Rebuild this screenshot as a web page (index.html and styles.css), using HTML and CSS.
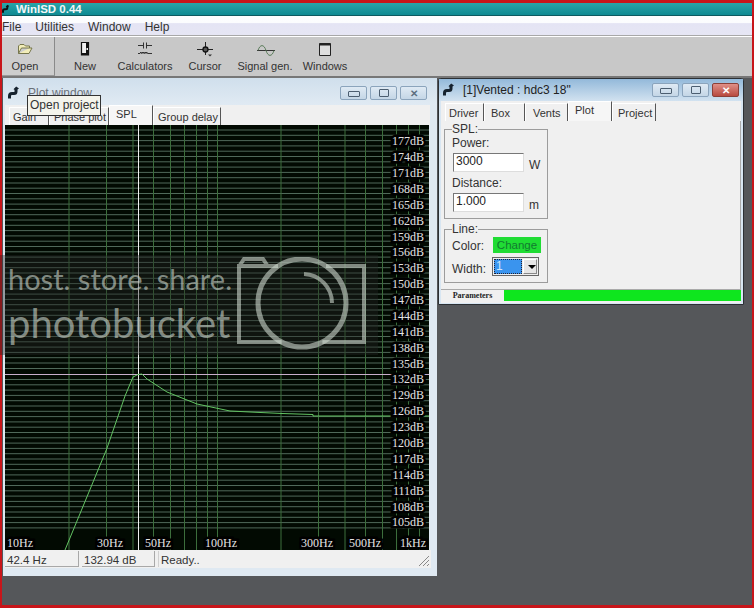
FILE: index.html
```html
<!DOCTYPE html>
<html lang="en">
<head>
<meta charset="utf-8">
<title>WinISD 0.44</title>
<link rel="stylesheet" href="styles.css">
</head>
<body>
<svg class="sprites" width="0" height="0" aria-hidden="true">
  <symbol id="pipe" viewBox="0 0 12 14">
    <path d="M1.500 12.500 V10 Q1.500 7.500 4 7.500 H6 Q8 7.500 8 5.500 V2.500" fill="none" stroke="currentColor" stroke-width="3"/>
    <path d="M5.500 3.200 L8.200 0.600 L11 2.400 L8 4.200 Z" fill="currentColor"/>
  </symbol>
</svg>
<div class="screen">
  <div class="app">
    <header class="titlebar"><svg class="title-icon"><use href="#pipe"/></svg><span>WinISD 0.44</span></header>
    <nav class="menubar"><span>File</span><span>Utilities</span><span>Window</span><span>Help</span></nav>
    <div class="toolbar">
      <div class="tool tool-open">
        <svg class="tool-icon" viewBox="0 0 20 16"><path d="M3.500 12.500 V5 L5 3.500 H9 L10.500 5 H14.500 V7 H6.500 L3.500 12.500 H14 L17 7 H14.500" fill="#f2edb8" stroke="#77774c"/></svg>
        <span>Open</span>
      </div>
      <div class="tool">
        <svg class="tool-icon" viewBox="0 0 20 16"><path d="M6.500 1.500 H13.500 V14 H6.500 Z" fill="#f0f0f0" stroke="#111" stroke-width="1.200"/><path d="M11 2 H14 V14 H7 V12 H11 Z" fill="#111"/><path d="M11.500 7 H13 V9 H11.500 Z" fill="#f0f0f0"/></svg>
        <span>New</span>
      </div>
      <div class="tool">
        <svg class="tool-icon" viewBox="0 0 20 16"><path d="M3 4.500 H8.500 M8.500 1.500 V7.500 M11.500 1.500 V7.500 M11.500 4.500 H17" fill="none" stroke="#333"/><path d="M3 12.500 H5 q.75 -3 1.500 0 q.75 -3 1.500 0 q.75 -3 1.500 0 q.75 -3 1.500 0 q.75 -3 1.500 0 H17" fill="none" stroke="#333"/></svg>
        <span>Calculators</span>
      </div>
      <div class="tool">
        <svg class="tool-icon" viewBox="0 0 20 16"><path d="M10.500 1 V14 M2 8.500 H18" stroke="#222"/><circle cx="10.500" cy="8.500" r="2.500" fill="#555" stroke="#111" stroke-width="1.300"/><path d="M13 13.500 H17 L15 15.500 Z" fill="#333"/></svg>
        <span>Cursor</span>
      </div>
      <div class="tool">
        <svg class="tool-icon tool-wide" viewBox="0 0 24 16"><path d="M4 9.500 H22" stroke="#333"/><path d="M5 9.500 C7 3 11 3 13 9.500 C15 16 19 16 21 9.500" fill="none" stroke="#5a7c5a"/></svg>
        <span>Signal gen.</span>
      </div>
      <div class="tool">
        <svg class="tool-icon" viewBox="0 0 20 16"><path d="M4.500 2.500 H15.500 V14.500 H4.500 Z" fill="#dedede" stroke="#222"/><path d="M4.500 3.500 H15.500" stroke="#222" stroke-width="2"/></svg>
        <span>Windows</span>
      </div>
    </div>
    <main class="desktop">
      <section class="window plot-window">
        <div class="win-title"><svg class="win-icon"><use href="#pipe"/></svg><span class="win-name">Plot window</span>
          <div class="win-buttons"><i class="wb wb-min"></i><i class="wb wb-max"></i><i class="wb wb-close">✕</i></div>
        </div>
        <div class="tabs plot-tabs">
          <span class="tab t-gain">Gain</span><span class="tab t-phase">Phase plot</span><span class="tab sel t-spl">SPL</span><span class="tab t-group">Group delay</span>
        </div>
        <svg class="chart" viewBox="5 126 424 425" width="424" height="425">
          <rect x="5" y="126" width="424" height="425" fill="#020a02"/>
          <path class="hgrid" d="M5 131h424M5 136.300h424M5 141.600h424M5 146.900h424M5 152.200h424M5 157.500h424M5 162.800h424M5 168.100h424M5 173.400h424M5 178.700h424M5 184h424M5 189.200h424M5 194.500h424M5 199.800h424M5 205.100h424M5 210.400h424M5 215.700h424M5 221h424M5 226.300h424M5 231.600h424M5 236.900h424M5 242.200h424M5 247.500h424M5 252.800h424M5 258.100h424M5 263.400h424M5 268.700h424M5 274h424M5 279.300h424M5 284.600h424M5 289.900h424M5 295.100h424M5 300.400h424M5 305.700h424M5 311h424M5 316.300h424M5 321.600h424M5 326.900h424M5 332.200h424M5 337.500h424M5 342.800h424M5 348.100h424M5 353.400h424M5 358.700h424M5 364h424M5 369.500h424M5 380.500h424M5 385.800h424M5 391.100h424M5 396.400h424M5 401.700h424M5 407h424M5 412.300h424M5 417.600h424M5 422.900h424M5 428.200h424M5 433.500h424M5 438.800h424M5 444.100h424M5 449.400h424M5 454.700h424M5 460h424M5 465.300h424M5 470.600h424M5 475.900h424M5 481.200h424M5 486.500h424M5 491.800h424M5 497.100h424M5 502.400h424M5 507.700h424M5 513h424M5 518.300h424M5 523.600h424M5 528.900h424"/>
          <path class="vgrid" d="M69 126V551M106.500 126V551M133 126V551M153.500 126V551M170.500 126V551M184.500 126V551M196.500 126V551M207.500 126V551M217.500 126V551M281 126V551M318.500 126V551M345 126V551M365.500 126V551M382.500 126V551M396.500 126V551M408.500 126V551M419.500 126V551"/>
          <path class="pink" d="M5 375.500H429"/>
          <path class="cursor" d="M138.500 126V551"/>
          <path class="curve" d="M65 551 L106.700 450 L125 397 L133 378 L138 375.500 L142 375 L147 380 L167 393 L197 405 L230 412 L250 413 L282 414.500 L313 415.500 L313 417 L429 417"/>
          <g class="ticks">
            <text x="424" y="146">177dB</text><text x="424" y="162">174dB</text><text x="424" y="178">171dB</text><text x="424" y="194">168dB</text><text x="424" y="209.500">165dB</text><text x="424" y="225.500">162dB</text><text x="424" y="241.500">159dB</text><text x="424" y="257">156dB</text><text x="424" y="273">153dB</text><text x="424" y="289">150dB</text><text x="424" y="305">147dB</text><text x="424" y="321">144dB</text><text x="424" y="336.500">141dB</text><text x="424" y="352.500">138dB</text><text x="424" y="368.500">135dB</text><text x="424" y="384">132dB</text><text x="424" y="400">129dB</text><text x="424" y="416">126dB</text><text x="424" y="432">123dB</text><text x="424" y="448">120dB</text><text x="424" y="464">117dB</text><text x="424" y="480">114dB</text><text x="424" y="495.500">111dB</text><text x="424" y="511.500">108dB</text><text x="424" y="527">105dB</text>
          </g>
          <g class="ticks hz">
            <text x="7" y="548">10Hz</text><text x="97" y="548">30Hz</text><text x="145" y="548">50Hz</text><text x="205" y="548">100Hz</text><text x="301" y="548">300Hz</text><text x="349" y="548">500Hz</text><text x="400" y="548">1kHz</text>
          </g>
        </svg>
        <div class="statusbar">
          <span class="field f-hz">42.4 Hz</span><span class="field f-db">132.94 dB</span><span class="field f-msg">Ready..</span>
          <svg class="grip" viewBox="0 0 12 12"><path d="M1 11 L11 1 M5 11 L11 5 M9 11 L11 9" stroke="#888" fill="none"/></svg>
        </div>
      </section>

      <section class="window vented-window">
        <div class="win-title"><svg class="win-icon"><use href="#pipe"/></svg><span class="win-name">[1]Vented : hdc3 18"</span>
          <div class="win-buttons"><i class="wb wb-min"></i><i class="wb wb-max"></i><i class="wb wb-close">✕</i></div>
        </div>
        <div class="tabs vent-tabs">
          <span class="tab t-driver">Driver</span><span class="tab t-box">Box</span><span class="tab t-vents">Vents</span><span class="tab sel t-plot">Plot</span><span class="tab t-project">Project</span>
        </div>
        <div class="panel">
          <fieldset class="group spl-group">
            <legend>SPL:</legend>
            <label>Power:</label>
            <div class="field-row"><span class="input">3000</span><span class="unit">W</span></div>
            <label class="lbl-dist">Distance:</label>
            <div class="field-row"><span class="input">1.000</span><span class="unit">m</span></div>
          </fieldset>
          <fieldset class="group line-group">
            <legend>Line:</legend>
            <div class="line-row color-row"><span>Color:</span><span class="change">Change</span></div>
            <div class="line-row width-row"><span>Width:</span>
              <span class="select"><span class="select-val">1</span><span class="select-btn"></span></span>
            </div>
          </fieldset>
        </div>
        <div class="bottom-tabs"><span class="params">Parameters</span><span class="params-fill"></span></div>
      </section>
    </main>
  </div>

  <div class="tooltip">Open project</div>

  <div class="watermark">
    <div class="wm-text">
      <div class="wm-line1">host. store. share.</div>
      <div class="wm-line2">photobucket</div>
    </div>
    <svg class="wm-camera" viewBox="0 0 132 94">
      <path d="M42 9 H3 V85 H45.600 M86.400 85 H128 V9 H90 M4 8 L8 2 H27 L31 8" fill="none" stroke="currentColor" stroke-width="4"/>
      <circle cx="66" cy="46" r="44" fill="none" stroke="currentColor" stroke-width="5"/>
      <path d="M68 17 A29 29 0 0 1 96 46" fill="none" stroke="currentColor" stroke-width="4"/>
    </svg>
  </div>
</div>
</body>
</html>
```
FILE: styles.css
```css
* { box-sizing: border-box; }
html, body { margin: 0; padding: 0; }
body { width: 754px; height: 608px; overflow: hidden; font-family: "Liberation Sans", Arial, sans-serif; font-size: 12px; color: #222; }
.sprites { position: absolute; }
.screen { position: relative; width: 754px; height: 608px; background: #c8151a; padding: 3px 2px; }
.app { display: flex; flex-direction: column; height: 100%; }

.titlebar { height: 13px; display: flex; align-items: center; background: linear-gradient(#2aa4a8, #0e8a92); border-bottom: 1px solid #0c5a60; color: #f2f6f6; font-size: 11.500px; font-weight: bold; overflow: hidden; }
.titlebar span { margin-left: 6px; }
.title-icon { width: 8px; height: 10px; color: #111; }

.menubar { height: 20px; display: flex; align-items: center; gap: 14px; padding-top: 2px; background: linear-gradient(#fdfefe 0, #fbfcfe 35%, #e4e4f4 40%, #e6e6f4 100%); font-size: 12px; color: #333; border-bottom: 1px solid #a8a8a8; }
.toolbar { height: 42px; display: flex; background: #c8c8c8; border-top: 1px solid #fff; border-bottom: 2px solid #777; font-size: 11px; }
.tool { width: 60px; display: flex; flex-direction: column; align-items: center; color: #333; padding-top: 4px; }
.tool span { margin-top: 3px; line-height: 13px; white-space: nowrap; }
.tool-icon { width: 20px; height: 16px; flex: none; }
.tool-wide { width: 24px; }
.tool-open { width: 53px; padding-right: 6px; background: #cdcdcd; border-right: 1px solid #8a8a8a; border-bottom: 1px solid #999; }

.desktop { position: relative; flex: 1; background: #55575a; }
.window { position: absolute; display: flex; flex-direction: column; border-radius: 3px 3px 0 0; }
.plot-window { left: 1px; top: 0; width: 434px; height: 498px; background: #dfe9f2; padding: 0 7px 0 2px; }
.vented-window { left: 436px; top: 0; width: 306px; height: 227px; background: #d8e6f2; border: 1px solid #2c3034; padding: 0 2px; }

.win-title { display: flex; align-items: center; flex: none; }
.plot-window .win-title { height: 27px; color: #6a7078; padding: 3px 0 0 5px; background: linear-gradient(#d0dfec, #e0eaf3); margin: 0 -7px 0 -2px; }
.vented-window .win-title { height: 22px; color: #222; padding: 0 0 0 4px; margin: 0 -2px; background: linear-gradient(#93b9da, #d2e2f0); }
.win-icon { width: 12px; height: 14px; color: #16222e; flex: none; }
.win-name { margin-left: 8px; font-size: 12px; white-space: nowrap; }
.win-buttons { margin-left: auto; display: flex; gap: 3px; }
.plot-window .win-buttons { margin-right: 10px; }
.vented-window .win-buttons { margin-right: 4px; }
.wb { width: 27px; height: 14px; border: 1px solid #8ba4bc; border-radius: 2px; background: linear-gradient(#dfeaf4, #c4d6e6); display: flex; align-items: center; justify-content: center; font-style: normal; font-size: 10px; font-weight: bold; color: #5d6f80; }
.wb-min::before { content: ""; width: 10px; height: 4px; border: 1px solid #4c5e70; border-radius: 1px; margin-top: 2px; }
.wb-max::before { content: ""; width: 8px; height: 6px; border: 1px solid #4c5e70; border-radius: 1px; }
.vented-window .wb-close { background: linear-gradient(#e09088, #b84a40); border-color: #8c4038; color: #fff; }

.tabs { display: flex; flex: none; height: 20px; background: #f0f0f0; align-items: flex-end; }
.tab { height: 18px; display: flex; align-items: center; background: #f0f0f0; border-right: 1px solid #555; border-top: 1px solid #fff; border-left: 1px solid #fff; font-size: 11px; color: #333; white-space: nowrap; }
.tab.sel { height: 20px; padding-bottom: 4px; background: #f6f6f6; }
.t-gain { width: 40px; margin-left: 4px; padding-left: 3px; }
.t-phase { width: 60px; padding-left: 4px; }
.t-spl { width: 44px; padding-left: 6px; }
.t-group { width: 68px; padding-left: 4px; }
.vent-tabs { padding-left: 4px; }
.t-driver { width: 39px; padding-left: 3px; }
.t-box { width: 41px; padding-left: 6px; }
.t-vents { width: 43px; padding-left: 7px; }
.t-plot { width: 44px; padding-left: 6px; }
.t-project { width: 44px; padding-left: 5px; }

.chart { display: block; flex: none; }
.chart path { fill: none; }
.hgrid { stroke: #50695a; stroke-width: 1; }
.vgrid { stroke: #3c6e3c; stroke-width: 1; }
.pink { stroke: #c8aecb; stroke-width: 1; }
.cursor { stroke: #f0f0f0; stroke-width: 1; }
.curve { stroke: #63c463; stroke-width: 1; }
.ticks text { font-family: "Liberation Serif", "Times New Roman", serif; font-size: 12px; fill: #e4e4e4; text-anchor: end; stroke: #000; stroke-width: 5px; paint-order: stroke; stroke-linejoin: miter; }
.ticks.hz text { text-anchor: start; }

.statusbar { position: relative; flex: none; height: 18px; display: flex; background: #f0f0f0; padding-top: 1px; font-size: 11.500px; margin-right: -1px; }
.field { height: 16px; border-right: 1px solid #a8a8a8; border-bottom: 1px solid #a8a8a8; padding: 2px 0 0 2px; line-height: 15px; color: #333; }
.f-hz { width: 74px; }
.f-db { width: 73px; margin-left: 3px; }
.f-msg { margin-left: 3px; border: 0; border-left: 1px solid #d0d0d0; }
.grip { position: absolute; right: 1px; bottom: 1px; width: 12px; height: 12px; }

.panel { flex: none; height: 168px; background: #f0f0f0; padding: 4px 0 0 3px; border-right: 1px solid #aaa; }
.group { width: 104px; margin: 0; padding: 0 0 0 7px; border: 1px solid #9c9c9c; font-size: 12px; color: #333; }
.group legend { padding: 0; font-size: 12px; line-height: 9px; }
.spl-group { height: 94px; }
.line-group { height: 58px; margin-top: 6px; }
.group label { display: block; line-height: 13px; margin-top: 3px; }
.field-row { display: flex; align-items: flex-end; margin-top: 3px; }
.input { width: 71px; height: 19px; border: 1px solid #777; border-right-color: #ddd; border-bottom-color: #ddd; background: #fff; padding-left: 2px; line-height: 15px; font-size: 12px; color: #222; margin-left: 1px; }
.unit { margin-left: 5px; line-height: 13px; }
.group .lbl-dist { margin-top: 5px; }
.line-row { display: flex; justify-content: space-between; }
.color-row { height: 16px; margin-top: 3px; padding-right: 6px; align-items: flex-start; }
.color-row > span:first-child { margin-top: 2px; }
.change { width: 48px; height: 16px; background: #20dc34; color: #127a30; font-size: 11.500px; text-align: center; line-height: 16px; }
.width-row { margin-top: 4px; padding-right: 8px; height: 19px; align-items: flex-end; }
.select { display: flex; width: 47px; height: 19px; border: 1px solid #666; padding: 1px; background: #eee; }
.select-val { width: 28px; background: #3a94ee; color: #cfe4fa; outline: 1px dotted #223; outline-offset: -1px; line-height: 15px; padding-left: 2px; }
.select-btn { position: relative; flex: 1; margin-left: 1px; background: #e6e6e6; border: 1px solid #888; border-top-color: #fff; border-left-color: #fff; }
.select-btn::after { content: ""; position: absolute; left: 4px; top: 5px; border: 4px solid transparent; border-top: 4px solid #000; border-bottom: 0; }

.bottom-tabs { display: flex; height: 14px; flex: none; background: #f0f0f0; border-top: 1px solid #aaa; }
.params { width: 63px; font-family: "Liberation Serif", serif; font-size: 8px; font-weight: bold; line-height: 11px; text-align: center; color: #222; }
.params-fill { flex: 1; height: 11px; background: #0ee61e; }

.tooltip { position: absolute; left: 27px; top: 95px; width: 74px; height: 21px; background: #f4f4ec; border: 1px solid #333; font-size: 12px; line-height: 18px; padding-left: 2px; color: #333; white-space: nowrap; }

.watermark { position: absolute; left: 0; top: 255px; width: 378px; height: 100px; background: rgba(34, 34, 34, .4); color: rgba(205, 215, 205, .6); }
.wm-text { position: absolute; left: 8px; top: 5px; font-family: Lato, "Open Sans", sans-serif; font-weight: 400; white-space: nowrap; }
.wm-line1 { font-size: 29px; line-height: 38px; }
.wm-line2 { font-size: 40px; line-height: 50px; }
.wm-camera { position: absolute; left: 236px; top: 2px; width: 132px; height: 94px; color: rgba(205, 215, 205, .6); }
```
